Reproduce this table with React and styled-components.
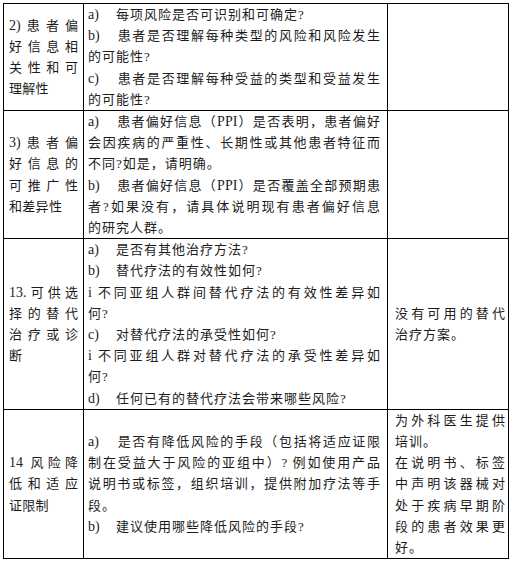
import React from "react";
import styled, { createGlobalStyle } from "styled-components";

const Global = createGlobalStyle`
  html, body { margin: 0; padding: 0; background: #fff; }
  body {
    font-family: "Liberation Serif", "Noto Sans CJK SC", serif;
    color: #1c1c1c;
  }
`;

const Page = styled.div`
  padding: 3px 0 0 3px;
`;

const Table = styled.table`
  border-collapse: collapse;
  table-layout: fixed;
  width: 505px;
  font-size: 13px;
  line-height: 21.2px;
`;

const Col = styled.col`
  width: ${(p) => p.$w}px;
`;

const Cell = styled.td`
  box-sizing: border-box;
  border: 1px solid #000;
  vertical-align: middle;
  overflow: visible;
`;

const LabelCell = styled(Cell)`
  padding: 0 5px 0 5px;
`;

const ContentCell = styled(Cell)`
  padding: 0 7px 0 4px;
`;

const NoteCell = styled(Cell)`
  padding: 0 3px 0 7px;
`;

const Line = styled.div`
  text-align: justify;
  text-align-last: ${(p) => (p.$fill ? "justify" : "left")};
  letter-spacing: ${(p) => (p.$fill ? "0" : `${p.$gap ?? 1}px`)};
`;

const Marker = styled.span`
  display: inline-block;
  width: 28px;
  font-size: 14px;
  letter-spacing: 0;
`;

const Latin = styled.span`
  font-size: 14px;
  letter-spacing: 0;
`;

const rows = [
  {
    label: ["2)患者偏", "好信息相", "关性和可", "理解性"],
    content: [
      { m: "a)", lines: ["每项风险是否可识别和可确定?"] },
      { m: "b)", lines: ["患者是否理解每种类型的风险和风险发生", "的可能性?"] },
      { m: "c)", lines: ["患者是否理解每种受益的类型和受益发生", "的可能性?"] },
    ],
    note: [],
  },
  {
    label: ["3)患者偏", "好信息的", "可推广性", "和差异性"],
    content: [
      {
        m: "a)",
        lines: [
          "患者偏好信息（PPI）是否表明，患者偏好",
          "会因疾病的严重性、长期性或其他患者特征而",
          "不同?如是，请明确。",
        ],
      },
      {
        m: "b)",
        lines: [
          "患者偏好信息（PPI）是否覆盖全部预期患",
          "者?如果没有，请具体说明现有患者偏好信息",
          "的研究人群。",
        ],
      },
    ],
    note: [],
  },
  {
    label: ["13.可供选", "择的替代", "治疗或诊", "断"],
    content: [
      { m: "a)", lines: ["是否有其他治疗方法?"] },
      { m: "b)", lines: ["替代疗法的有效性如何?"] },
      { m: "", lines: ["i 不同亚组人群间替代疗法的有效性差异如", "何?"] },
      { m: "c)", lines: ["对替代疗法的承受性如何?"] },
      { m: "", lines: ["i 不同亚组人群对替代疗法的承受性差异如", "何?"] },
      { m: "d)", lines: ["任何已有的替代疗法会带来哪些风险?"] },
    ],
    note: [["没有可用的替代", "治疗方案。"]],
  },
  {
    label: ["14 风险降", "低和适应", "证限制"],
    content: [
      {
        m: "a)",
        lines: [
          "是否有降低风险的手段（包括将适应证限",
          "制在受益大于风险的亚组中）? 例如使用产品",
          "说明书或标签，组织培训，提供附加疗法等手",
          "段。",
        ],
      },
      { m: "b)", lines: ["建议使用哪些降低风险的手段?"] },
    ],
    note: [
      ["为外科医生提供", "培训。"],
      ["在说明书、标签", "中声明该器械对", "处于疾病早期阶", "段的患者效果更", "好。"],
    ],
  },
];

function renderText(t) {
  const parts = t.split(/([A-Za-z0-9().]+)/);
  return parts.map((s, i) =>
    /^[A-Za-z0-9().]+$/.test(s) ? <Latin key={i}>{s}</Latin> : s
  );
}

function Lines({ lines, gap }) {
  return lines.map((t, i) => (
    <Line key={i} $fill={i < lines.length - 1} $gap={gap}>
      {renderText(t)}
    </Line>
  ));
}

export default function App() {
  return (
    <Page>
      <Global />
      <Table>
        <colgroup>
          <Col $w={80} />
          <Col $w={304} />
          <Col $w={121} />
        </colgroup>
        <tbody>
          {rows.map((r, ri) => (
            <tr key={ri}>
              <LabelCell>
                <Lines lines={r.label} gap={0.3} />
              </LabelCell>
              <ContentCell>
                {r.content.map((p, pi) =>
                  p.lines.map((t, li) => (
                    <Line key={`${pi}-${li}`} $fill={li < p.lines.length - 1}>
                      {li === 0 && p.m ? <Marker>{p.m}</Marker> : null}
                      {renderText(t)}
                    </Line>
                  ))
                )}
              </ContentCell>
              <NoteCell>
                {r.note.map((para, i) => (
                  <Lines key={i} lines={para} />
                ))}
              </NoteCell>
            </tr>
          ))}
        </tbody>
      </Table>
    </Page>
  );
}
